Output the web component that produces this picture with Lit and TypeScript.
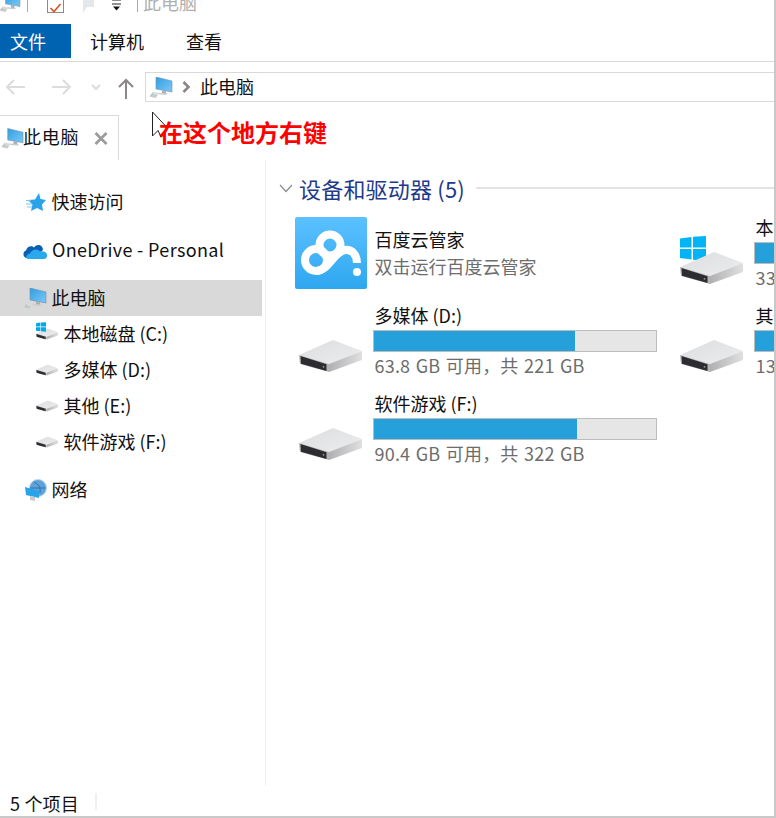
import { LitElement, html, css, svg } from "lit";
import { customElement } from "lit/decorators.js";

const computer = (cls: string) => html`<svg class=${cls} viewBox="0 0 24 21">
  <defs><linearGradient id="scr" x1="0" y1="0" x2="1" y2="1"><stop offset="0" stop-color="#2f9fe6"/><stop offset="1" stop-color="#7cc8f5"/></linearGradient></defs>
  <polygon points="7,0 23,4 23,15 7,12" fill="url(#scr)" stroke="#6f8fa6" stroke-width=".6"/>
  <polygon points="13,13.4 17,14.2 17,17 13,16.4" fill="#a9b0b6"/>
  <polygon points="9,15.8 19,16.6 17,18 8,17" fill="#c9cdd0"/>
  <polygon points="4,14.8 10,16 7,21 0,19.4" fill="#d9dcdd"/>
  <path d="M2 17.6 L8 18.8 M1.4 19 L7 20.2 M4 15.8 L2.4 19" stroke="#a7abad" stroke-width=".5" fill="none"/>
</svg>`;

const drive = (cls: string) => html`<svg class=${cls} viewBox="0 0 63 32">
  <defs>
    <linearGradient id="dtop" x1="0" y1="0" x2="1" y2="1"><stop offset="0" stop-color="#dcdde0"/><stop offset="1" stop-color="#eceded"/></linearGradient>
    <linearGradient id="dr" x1="0" y1="0" x2="1" y2="0"><stop offset="0" stop-color="#b0b0b2"/><stop offset="1" stop-color="#e0e0e1"/></linearGradient>
  </defs>
  <polygon points="0,15 34,0 63,11 30,24" fill="url(#dtop)"/>
  <polygon points="30,24 63,11 63,20 30,32" fill="url(#dr)"/>
  <polygon points="0,15 30,24 30,32 1,24" fill="#b4b4b6"/>
  <polygon points="1.5,16 27.5,24.2 27.5,31 2,23.8" fill="#2c2c31"/>
  <circle cx="24.5" cy="26.8" r=".9" fill="#9a9a9a"/>
</svg>`;

const win = svg`
  <polygon points="0,2.5 11.5,1 11.5,11.5 0,11.5"/>
  <polygon points="13,.8 26,0 26,11.5 13,11.5"/>
  <polygon points="0,13 11.5,13 11.5,23.5 0,22"/>
  <polygon points="13,13 26,13 26,25 13,23.7"/>`;

const tiles = [
  { name: "多媒体 (D:)", sub: "63.8 GB 可用\uFF0C共 221 GB", free: 63.8, total: 221 },
  { name: "其他 (E:)", sub: "13.0 GB 可用\uFF0C共 100 GB", free: 13, total: 100 },
  { name: "软件游戏 (F:)", sub: "90.4 GB 可用\uFF0C共 322 GB", free: 90.4, total: 322 },
];

const driveTile = (t: { name: string; sub: string; free: number; total: number }, isWin = false) => html`
  <div class="tile">
    <div class="tile-icon drive-slot">
      ${isWin ? html`<svg class="win" viewBox="0 0 26 25" fill="#00b4f5">${win}</svg>` : ""}
      ${drive("drive-lg")}
    </div>
    <div class="tile-text drive-text">
      <div class="name">${t.name}</div>
      <div class="bar"><div class="fill" style="width:${(100 * (t.total - t.free)) / t.total}%"></div></div>
      <div class="sub">${t.sub}</div>
    </div>
  </div>`;

@customElement("app-root")
export class AppRoot extends LitElement {
  static styles = css`
    :host {
      display: block; position: relative; box-sizing: border-box; width: 776px; height: 818px;
      overflow: hidden; background: #fff; color: #111;
      border-right: 2px solid #c9c9c9; border-bottom: 2px solid #c9c9c9;
      font: 18px/24px "Noto Sans CJK SC", "Noto Sans", sans-serif;
      display: flex; flex-direction: column;
    }
    .title { height: 24px; flex: none; display: flex; overflow: hidden; position: relative; }
    .title-in { display: flex; align-items: flex-start; height: 24px; margin-top: -7px; }
    .pc-title { width: 22px; height: 19px; margin-left: -1px; flex: none; }
    .qsep { width: 1px; height: 19px; background: #a9a9a9; flex: none; }
    .qsep.first { margin-left: 6px; }
    .check { width: 15px; height: 18px; margin: 0 0 0 19px; border: 1px solid #8a8a8a; flex: none; box-sizing: content-box; }
    .ghost { width: 16px; height: 21px; margin-left: 16px; flex: none; }
    .drop { width: 11px; height: 15px; margin: 5px 15px 0 15px; flex: none; }
    .title-text { color: #b0b0b0; margin-left: 5px; line-height: 18px; }
    .menu { height: 34px; flex: none; display: flex; align-items: center; }
    .menu .file { width: 71px; height: 34px; background: #0063b1; color: #fff; display: flex; align-items: center; padding-left: 10px; box-sizing: border-box; }
    .menu .m1 { margin-left: 19px; }
    .menu .m2 { margin-left: 42px; }
    .rule { height: 4px; flex: none; border-bottom: 1px solid #d9d9d9; box-sizing: border-box; }
    .nav { height: 53px; flex: none; display: flex; align-items: flex-start; padding-top: 10px; box-sizing: border-box; }
    .nav-btns { width: 145px; height: 30px; flex: none; }
    .address { flex: 1; height: 30px; box-sizing: border-box; border: 1px solid #d9d9d9; border-right: none; display: flex; align-items: center; padding-left: 3px; }
    .address span { margin-top: -2px; }
    .pc-addr { width: 24px; height: 21px; flex: none; }
    .crumb { width: 9px; height: 12px; margin: 0 9px 0 9px; flex: none; }
    .tabs { height: 45px; flex: none; display: flex; }
    .tab { width: 119px; box-sizing: border-box; border-top: 1px solid #d9d9d9; border-right: 1px solid #d9d9d9; display: flex; align-items: center; padding-left: 1px; }
    .pc-tab { width: 23px; height: 21px; flex: none; margin-right: -1px; }
    .close { width: 14px; height: 13px; margin-left: 15px; flex: none; }
    .tab span { margin-top: -4px; letter-spacing: .8px; }
    .body { flex: 1; display: flex; min-height: 0; }
    .side { width: 266px; flex: none; box-sizing: border-box; border-right: 1px solid #efefef; padding: 24px 3px 0 0; display: flex; flex-direction: column; gap: 12px; }
    .row { height: 36px; display: flex; align-items: center; white-space: nowrap; box-sizing: border-box; padding-bottom: 2px; }
    .row.sel { background: #d9d9d9; }
    .ic { width: 51.5px; flex: none; display: flex; justify-content: flex-end; box-sizing: border-box; margin-top: 2px; }
    .ic.star { padding-right: 5.5px; }
    .ic.pc, .ic.net { padding-right: 4.5px; }
    .ic.cloud { width: 52px; padding-right: 5px; }
    .row svg { flex: none; }
    .side-ic { width: 24px; height: 21px; }
    .ic2 { position: relative; width: 63.5px; flex: none; padding: 0 5.5px 0 36px; box-sizing: border-box; margin-top: 2px; }
    .drive-sm { width: 22px; height: 12px; display: block; }
    .one { letter-spacing: .35px; }
    .win-holder { position: absolute; left: 36px; top: -6px; width: 10px; height: 10px; }
    .content { flex: 1; min-width: 0; overflow: hidden; }
    .group { height: 57px; display: flex; align-items: flex-start; white-space: nowrap; }
    .chev { width: 14px; height: 9px; margin: 24px 6px 0 13px; flex: none; }
    .group-title { font-size: 22px; letter-spacing: .2px; line-height: 30px; color: #1e3a8a; margin-top: 13px; }
    .group-line { flex: 1; height: 2px; background: #e3e3e3; margin: 27px 0 0 11px; }
    .tiles { display: grid; grid-template-columns: 381px 381px; grid-auto-rows: 88px; padding-left: 29px; }
    .tile { display: flex; align-items: flex-start; white-space: nowrap; }
    .tile-icon { width: 79.5px; flex: none; }
    .drive-slot { position: relative; height: 72px; }
    .drive-lg { position: absolute; left: 4px; top: 35px; width: 63px; height: 32px; }
    .win { position: absolute; left: 4px; top: 19px; width: 26px; height: 25px; }
    .baidu { width: 72px; height: 72px; border-radius: 2px; display: block; }
    .tile-text { width: 282.5px; flex: none; }
    .name { line-height: 20px; color: #111; }
    .bar { height: 22px; box-sizing: border-box; border: 1px solid #bcbcbc; background: #e6e6e6; margin: 5px 0 0 -1.5px; }
    .fill { height: 100%; background: #26a0da; }
    .sub { color: #6d6d6d; line-height: 24px; margin-top: 1px; }
    .drive-text .sub { letter-spacing: .2px; word-spacing: 1.2px; }
    .baidu-text .name { line-height: 24px; margin-top: 10px; }
    .baidu-text .sub { line-height: 24px; margin-top: 3px; }
    .status { height: 30px; flex: none; display: flex; align-items: center; padding: 3px 0 0 10px; box-sizing: border-box; letter-spacing: .2px; }
    .status i { width: 2px; height: 17px; background: #f0f0f0; margin: -2px 0 0 16px; }
    .cursor { position: absolute; left: 151px; top: 111px; width: 18px; height: 27px; }
    .note { position: absolute; left: 159px; top: 115px; font-size: 24px; line-height: 34px; font-weight: 700; color: #fe0000; white-space: nowrap; }
  `;

  render() {
    return html`
      <div class="title">
        <div class="title-in">
          ${computer("pc-title")}
          <div class="qsep first"></div>
          <div class="check"><svg viewBox="0 0 15 18" width="15" height="18"><path d="M2.5 12 L6 15.5 L12.5 8" fill="none" stroke="#d9541e" stroke-width="1.6"/></svg></div>
          <svg class="ghost" viewBox="0 0 16 21"><path d="M3 0 H14 V14 H7 L3 20 Z" fill="#e4e7ec"/></svg>
          <svg class="drop" viewBox="0 0 11 15"><path d="M1 2 H10 M1 6 H10" stroke="#222" stroke-width="1.2"/><polygon points="2,8.5 9,8.5 5.5,12.5" fill="#111"/></svg>
          <div class="qsep"></div>
          <div class="title-text">此电脑</div>
        </div>
      </div>
      <div class="menu">
        <div class="file">文件</div>
        <div class="m1">计算机</div>
        <div class="m2">查看</div>
      </div>
      <div class="rule"></div>
      <div class="nav">
        <svg class="nav-btns" viewBox="0 0 145 30">
          <g fill="none" stroke="#dcdcdc" stroke-width="2">
            <path d="M25 15 H7 M14 8 L7 15 L14 22"/>
            <path d="M52 15 H70 M63 8 L70 15 L63 22"/>
            <path d="M92 13 L96 17 L100 13"/>
          </g>
          <path d="M126 27 V8 M119 15 L126 8 L133 15" fill="none" stroke="#8c8686" stroke-width="2"/>
        </svg>
        <div class="address">
          ${computer("pc-addr")}
          <svg class="crumb" viewBox="0 0 9 12"><path d="M1.5 1 L6.5 6 L1.5 11" fill="none" stroke="#8d8585" stroke-width="2.6"/></svg>
          <span>此电脑</span>
        </div>
      </div>
      <div class="tabs">
        <div class="tab">
          ${computer("pc-tab")}
          <span>此电脑</span>
          <svg class="close" viewBox="0 0 14 13"><path d="M1.5 1 L12.5 12 M12.5 1 L1.5 12" stroke="#9a9a9a" stroke-width="2.6"/></svg>
        </div>
      </div>
      <div class="body">
        <div class="side">
          <div class="row">
            <div class="ic star">
              <svg width="20" height="19" viewBox="0 0 20 19"><polygon points="13,0 14.5,6 20,7 16,11.5 17,18 11,15 5,18 6.5,11.5 2,7 9,6.4" fill="#2aa3ea"/><path d="M0 7.5 H5 M0 11 H6 M1 14 H6" stroke="#7cc4f2" stroke-width="1"/></svg>
            </div>
            快速访问
          </div>
          <div class="row">
            <div class="ic cloud">
              <svg width="24" height="17" viewBox="0 0 24 17"><path d="M6 16 H4 C0 16 -1 10 3 8.6 C4 4 9 3 11 5.5 C14 1 20 3 20 8 L10 16 Z" fill="#0a5fb4"/><path d="M5 17 C2 17 3 12 7 11.5 C9 7 15 6 17 9.5 C21 8.6 25 11 24 14.5 C23.6 16 22.6 17 21 17 Z" fill="#29a9ec"/></svg>
            </div>
            <span class="one">OneDrive - Personal</span>
          </div>
          <div>
            <div class="row sel">
              <div class="ic pc">${computer("side-ic")}</div>
              此电脑
            </div>
            <div class="row">
              <div class="ic2">
                <svg class="win-holder" viewBox="0 0 26 25" fill="#00a8ec">${win}</svg>
                ${drive("drive-sm")}
              </div>
              本地磁盘 (C:)
            </div>
            <div class="row"><div class="ic2">${drive("drive-sm")}</div>多媒体 (D:)</div>
            <div class="row"><div class="ic2">${drive("drive-sm")}</div>其他 (E:)</div>
            <div class="row"><div class="ic2">${drive("drive-sm")}</div>软件游戏 (F:)</div>
          </div>
          <div class="row">
            <div class="ic net">
              <svg width="22" height="22" viewBox="0 0 22 22">
                <circle cx="13" cy="9" r="8.5" fill="#5ea3d8" stroke="#b9d7ee" stroke-width="1"/>
                <path d="M9 3 C13 5 16 8 15 14 M5 9 H20" stroke="#2f6fb0" stroke-width="1" fill="none"/>
                <polygon points="0,8 14,12 14,19 1,16" fill="#29a3ea"/>
                <polygon points="5,17 10,18 10,22 5,21" fill="#c6cbd0"/>
              </svg>
            </div>
            网络
          </div>
        </div>
        <div class="content">
          <div class="group">
            <svg class="chev" viewBox="0 0 14 9"><path d="M1 1 L7 7.5 L13 1" fill="none" stroke="#8a8a8a" stroke-width="1.2"/></svg>
            <div class="group-title">设备和驱动器 (5)</div>
            <div class="group-line"></div>
          </div>
          <div class="tiles">
            <div class="tile">
              <div class="tile-icon">
                <svg class="baidu" viewBox="0 0 72 72">
                  <defs><linearGradient id="bd" x1="0" y1="0" x2="0" y2="1"><stop offset="0" stop-color="#5cc1ff"/><stop offset="1" stop-color="#2ea7f0"/></linearGradient></defs>
                  <rect width="72" height="72" fill="url(#bd)"/>
                  <g fill="none" stroke="#fff" stroke-width="8">
                    <circle cx="21" cy="43" r="11"/>
                    <circle cx="35" cy="28" r="10.5"/>
                    <path d="M21 54 C34 54 38 35 50 33 C57 32 62 38 62 46" stroke-linecap="butt"/>
                  </g>
                  <circle cx="62" cy="55" r="4" fill="#fff"/>
                </svg>
              </div>
              <div class="tile-text baidu-text">
                <div class="name">百度云管家</div>
                <div class="sub">双击运行百度云管家</div>
              </div>
            </div>
            ${driveTile({ name: "本地磁盘 (C:)", sub: "33.0 GB 可用\uFF0C共 100 GB", free: 33, total: 100 }, true)}
            ${tiles.map((t) => driveTile(t))}
          </div>
        </div>
      </div>
      <div class="status">5 个项目<i></i></div>
      <svg class="cursor" viewBox="0 0 18 27"><polygon points="1.5,1 1.5,25 7,19.5 10,26 16,16.5" fill="#fff" stroke="#222" stroke-width="1"/></svg>
      <div class="note">在这个地方右键</div>
    `;
  }
}
